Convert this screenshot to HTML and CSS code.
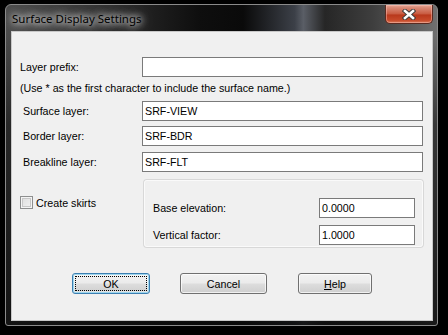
FILE: index.html
```html
<!DOCTYPE html>
<html>
<head>
<meta charset="utf-8">
<title>Surface Display Settings</title>
<link rel="stylesheet" href="styles.css">
</head>
<body>
<div class="desk">
  <div class="window">
    <div class="titlebar">
      <span class="title">Surface Display Settings</span>
      <div class="close">
        <svg width="14" height="11" viewBox="0 0 14 11">
          <path d="M3 2 L11 9 M11 2 L3 9" stroke="#3a3a3a" stroke-width="4.4" stroke-linecap="square" fill="none"/>
          <path d="M3 2 L11 9 M11 2 L3 9" stroke="#ffffff" stroke-width="2.6" stroke-linecap="square" fill="none"/>
        </svg>
      </div>
    </div>
    <div class="client">
      <div class="row">
        <span class="lbl">Layer prefix:</span>
        <div class="field wide"></div>
      </div>
      <div class="note">(Use * as the first character to include the surface name.)</div>
      <div class="row r-surface">
        <span class="lbl ind">Surface layer:</span>
        <div class="field wide">SRF-VIEW</div>
      </div>
      <div class="row r-border">
        <span class="lbl ind">Border layer:</span>
        <div class="field wide">SRF-BDR</div>
      </div>
      <div class="row r-break">
        <span class="lbl ind">Breakline layer:</span>
        <div class="field wide">SRF-FLT</div>
      </div>
      <div class="lower">
        <div class="checkcol">
          <span class="box"></span>
          <span class="checklbl">Create skirts</span>
        </div>
        <div class="panel">
          <div class="prow">
            <span>Base elevation:</span>
            <div class="field num">0.0000</div>
          </div>
          <div class="prow">
            <span>Vertical factor:</span>
            <div class="field num">1.0000</div>
          </div>
        </div>
      </div>
      <div class="buttons">
        <div class="btn ok"><span class="focus">OK</span></div>
        <div class="btn cancel">Cancel</div>
        <div class="btn help"><span class="u">H</span>elp</div>
      </div>
    </div>
  </div>
</div>
</body>
</html>
```
FILE: styles.css
```css
html, body {
  margin: 0;
  padding: 0;
}
body {
  width: 448px;
  height: 335px;
  overflow: hidden;
  background: #000;
  font-family: "Liberation Sans", Arial, sans-serif;
  font-size: 10.7px;
  color: #000;
}
.desk {
  padding: 4px 0 0 5px;
}
.window {
  width: 433px;
  height: 322px;
  box-sizing: border-box;
  border: 1px solid #8a8a8a;
  border-radius: 6px 6px 3px 3px;
  padding: 0 4px 4px 5px;
  display: flex;
  flex-direction: column;
  background:
    linear-gradient(to bottom, rgba(0,0,0,0) 0, rgba(0,0,0,0) 30px, rgba(10,10,10,0.55) 120px, rgba(10,10,10,0.85) 100%),
    linear-gradient(to right, #4c4c4c 0, #2c2c2c 25%, #0e0e0e 45%, #0a0a0a 55%, #3c4048 67%, #5a5e66 69%, #262626 74%, #3e3e3e 85%, #707070 100%);
}
.titlebar {
  height: 26px;
  display: flex;
  align-items: center;
  padding-left: 1px;
}
.title {
  font-family: "Noto Sans", "Open Sans", sans-serif;
  font-size: 11.5px;
  color: #000;
  text-shadow: 0 0 6px #fff, 0 0 10px rgba(255,255,255,0.9), 0 0 16px rgba(255,255,255,0.7);
  padding-top: 1px;
}
.close {
  margin-left: auto;
  align-self: flex-start;
  width: 46px;
  height: 18px;
  border: 1px solid #5a2a20;
  border-top: none;
  border-radius: 0 0 5px 5px;
  box-shadow: inset 0 0 0 1px rgba(255,200,190,0.45);
  background: linear-gradient(to bottom, #e7a897 0, #d98a76 15%, #c85a40 50%, #b8381c 55%, #c74a2a 85%, #d87a5a 100%);
  display: flex;
  align-items: center;
  justify-content: center;
}
.client {
  flex: 1;
  border: 1px solid #c8c8c8;
  background: #f0f0f0;
  padding: 25px 0 0 8px;
  display: flex;
  flex-direction: column;
}
.row {
  display: flex;
  align-items: center;
  height: 20px;
}
.lbl {
  width: 122px;
  flex: none;
}
.lbl.ind {
  padding-left: 3px;
  width: 119px;
}
.field {
  box-sizing: border-box;
  height: 20px;
  border: 1px solid #7a7a7a;
  background: #fff;
  padding-left: 2px;
  line-height: 18px;
  white-space: nowrap;
}
.wide {
  width: 281px;
}
.note {
  margin-top: 4px;
  height: 14px;
  line-height: 14px;
}
.r-surface { margin-top: 6px; }
.r-border { margin-top: 5px; }
.r-break { margin-top: 6px; }
.lower {
  display: flex;
  margin-top: 8px;
}
.checkcol {
  width: 124px;
  flex: none;
  display: flex;
  align-items: center;
  height: 13px;
  margin-top: 16px;
}
.box {
  box-sizing: border-box;
  width: 13px;
  height: 13px;
  border: 1px solid #8e8f8f;
  background: linear-gradient(135deg, #dcdcdc 0, #f4f4f4 100%);
  box-shadow: inset 0 0 0 1px #f4f4f4, inset 0 0 0 2px #c8c8c8;
  margin-right: 3px;
}
.panel {
  box-sizing: border-box;
  width: 279px;
  height: 67px;
  border: 1px solid #fafafa;
  border-radius: 3px;
  box-shadow: 0 0 0 1px #d8d8d8;
  padding: 17px 7px 0 8px;
  display: flex;
  flex-direction: column;
  gap: 7px;
}
.prow {
  display: flex;
  align-items: center;
  justify-content: space-between;
  height: 20px;
}
.num {
  width: 96px;
}
.buttons {
  display: flex;
  margin-top: 26px;
  padding-left: 52px;
}
.btn {
  box-sizing: border-box;
  height: 21px;
  border: 1px solid #707070;
  border-radius: 3px;
  background: linear-gradient(to bottom, #f2f2f2 0, #ebebeb 48%, #dddddd 52%, #cfcfcf 100%);
  box-shadow: inset 0 0 0 1px rgba(255,255,255,0.7);
  display: flex;
  align-items: center;
  justify-content: center;
}
.ok {
  width: 78px;
  border-color: #3c7fb1;
  box-shadow: inset 0 0 0 1px #9fd6ee, inset 0 0 0 2px rgba(255,255,255,0.4);
  padding: 2px;
}
.ok .focus {
  flex: 1;
  align-self: stretch;
  border: 1px dotted #000;
  display: flex;
  align-items: center;
  justify-content: center;
}
.cancel {
  width: 87px;
  margin-left: 30px;
}
.help {
  width: 74px;
  margin-left: 31px;
}
.u {
  text-decoration: underline;
}
```
